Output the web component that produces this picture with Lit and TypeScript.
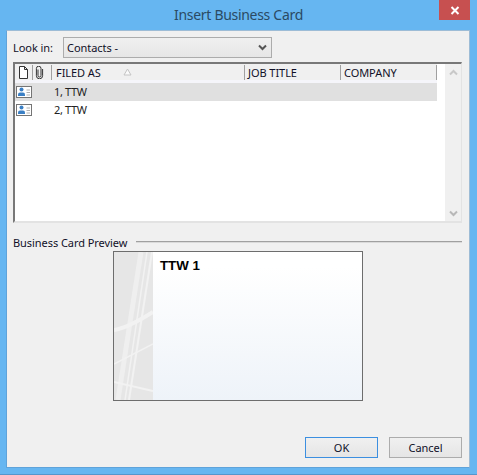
import { LitElement, html, css, svg } from "lit";
import { customElement } from "lit/decorators.js";

const cardIcon = svg`<svg class="ci" width="17" height="12" viewBox="0 0 17 12"><rect x="0.5" y="0.5" width="15" height="11" fill="#fff" stroke="#757575"/><circle cx="5.5" cy="3.6" r="2" fill="#3a7fc4"/><path d="M2 10 v-1.6 q0-2 2-2 h3 q2 0 2 2 v1.6z" fill="#3a7fc4"/><path d="M10.5 4h3.5M10.5 6.5h3.5M10.5 9h3.5" stroke="#b0b0b0" fill="none"/></svg>`;

@customElement("app-root")
export class AppRoot extends LitElement {
  static styles = css`
    :host { display: block; box-sizing: border-box; width: 477px; height: 475px; background: #66b6f1; border-bottom: 1px solid #5596cc; font-family: "Noto Sans", "Open Sans", sans-serif; font-size: 11px; letter-spacing: -0.06px; color: #101028; overflow: hidden; }
    .titlebar { height: 30px; display: flex; justify-content: center; position: relative; }
    .title { font-size: 14px; letter-spacing: -0.3px; line-height: 30px; color: #2b4a63; }
    .close { position: absolute; left: 439px; top: 0; width: 31px; height: 20px; background: #c75050; display: flex; align-items: center; justify-content: center; }
    .body { margin: 0 7px 0 6px; height: 438px; box-sizing: border-box; background: #f0f0f0; border: 1px solid #5fa3da; border-top-color: #9dbcd6; border-right-color: #9dbcd6; padding: 6px 7px 0 6px; display: flex; flex-direction: column; }
    .lookin { display: flex; align-items: center; height: 21px; }
    .lookin > span { width: 50px; flex: none; }
    .select { width: 209px; height: 21px; box-sizing: border-box; border: 1px solid #acacac; background: linear-gradient(#f0f0f0, #e6e6e6); display: flex; align-items: center; justify-content: space-between; padding: 0 4px 0 3px; }
    .list { margin-top: 4px; width: 449px; height: 161px; box-sizing: border-box; background: #fff; border-top: 2px solid #787878; border-left: 2px solid #787878; border-right: 1px solid #e3e3e3; border-bottom: 2px solid #e3e3e3; display: flex; }
    .table { width: 422px; }
    .head { display: grid; grid-template-columns: 18px 19px 193px 96px 96px; height: 15px; padding-top: 1px; background: #f0f0f0; }
    .head > div { border-right: 1px solid #a0a0a0; display: flex; align-items: center; box-sizing: border-box; white-space: nowrap; font-size: 11px; height: 15px; position: relative; }
    .head .filed { padding-left: 4px; }
    .head .job { padding-left: 3px; }
    .band { height: 3px; background: #f5f5fa; }
    .row { height: 18px; display: flex; align-items: center; padding-left: 1px; gap: 21px; }
    .row.sel { background: #e0e0e0; }
    .row span { color: #222; margin-top: -2px; letter-spacing: -0.35px; }
    .sort { position: absolute; left: 71px; top: 3px; }
    .scroll { margin-left: 8px; width: 16px; flex: none; background: #f0f0f0; display: flex; flex-direction: column; justify-content: space-between; align-items: center; padding: 5px 0 4px; box-sizing: border-box; }
    .legend { margin-top: 11px; display: flex; align-items: center; gap: 9px; height: 16px; }
    .legend i { flex: 1; height: 1px; background: #a0a0a0; border-bottom: 1px solid #dadada; margin-top: -1px; }
    .card { align-self: flex-start; margin: 1px 0 0 100px; width: 250px; height: 150px; box-sizing: border-box; border: 1px solid #6d6d6d; background: linear-gradient(#fff 10%, #eef3f9); display: flex; }
    .art { width: 39px; height: 100%; background: #e6e6e6; flex: none; }
    .art svg { display: block; }
    .name { margin: 6px 0 0 7px; font-family: "Liberation Sans", Arial, sans-serif; font-weight: bold; font-size: 13.3px; letter-spacing: 0; color: #000; }
    .buttons { margin-top: 36px; display: flex; justify-content: flex-end; gap: 11px; }
    .btn { width: 73px; height: 21px; box-sizing: border-box; border: 1px solid #acacac; background: linear-gradient(#f0f0f0, #e5e5e5); display: flex; align-items: center; justify-content: center; }
    .btn.def { border-color: #3c8fe0; }
  `;

  render() {
    return html`
      <div class="titlebar">
        <div class="title">Insert Business Card</div>
        <div class="close"><svg width="10" height="9" viewBox="0 0 10 9"><path d="M1.5 1l7 7M8.5 1l-7 7" stroke="#fff" stroke-width="2" fill="none"/></svg></div>
      </div>
      <div class="body">
        <div class="lookin">
          <span>Look in:</span>
          <div class="select"><span>Contacts -</span>
            <svg width="9" height="7" viewBox="0 0 9 7"><path d="M1 1.5l3.5 3.5 3.5-3.5" stroke="#555" stroke-width="2" fill="none"/></svg></div>
        </div>
        <div class="list">
          <div class="table">
            <div class="head">
              <div><svg style="margin-left:3px" width="11" height="13" viewBox="0 0 11 13"><path d="M1.5.5h5l3 3v9h-8zM6.5.5v3h3" fill="#fff" stroke="#333"/></svg></div>
              <div><svg style="margin-left:2px" width="9" height="13" viewBox="0 0 9 13"><path d="M3 3.5v6a1.5 1.5 0 0 0 3 0v-7a2.3 2.3 0 0 0-4.6 0v7.2a3 3 0 0 0 6.2 0V3" fill="none" stroke="#333"/></svg></div>
              <div class="filed">FILED AS<svg class="sort" width="9" height="8" viewBox="0 0 9 8"><path d="M4.5 1l3.5 6h-7z" fill="#fafafa" stroke="#c4c4c4"/></svg></div>
              <div class="job">JOB TITLE</div>
              <div class="job">COMPANY</div>
            </div>
            <div class="band"></div>
            <div class="row sel">${cardIcon}<span>1, TTW</span></div>
            <div class="row">${cardIcon}<span>2, TTW</span></div>
          </div>
          <div class="scroll">
            <svg width="9" height="7" viewBox="0 0 9 7"><path d="M1 5.5l3.5-3.5 3.5 3.5" stroke="#c8c8c8" stroke-width="2" fill="none"/></svg>
            <svg width="9" height="7" viewBox="0 0 9 7"><path d="M1 1.5l3.5 3.5 3.5-3.5" stroke="#b8b8b8" stroke-width="2" fill="none"/></svg>
          </div>
        </div>
        <div class="legend"><span>Business Card Preview</span><i></i></div>
        <div class="card">
          <div class="art">
            <svg width="39" height="148" viewBox="0 0 39 148">
              <g fill="none" stroke="#f2f2f2">
                <path d="M27 0 L4 148" stroke-width="5" opacity=".7"/>
                <path d="M38 0 L15 148" stroke-width="2"/>
                <path d="M33 0 L11 148" stroke-width="1.5"/>
                <path d="M0 78 Q14 76 39 60" stroke-width="4"/>
                <path d="M0 112 L39 92" stroke-width="1.5"/>
                <path d="M0 130 L39 139" stroke-width="2"/>
              </g>
            </svg>
          </div>
          <div class="name">TTW 1</div>
        </div>
        <div class="buttons">
          <div class="btn def">OK</div>
          <div class="btn">Cancel</div>
        </div>
      </div>
    `;
  }
}
